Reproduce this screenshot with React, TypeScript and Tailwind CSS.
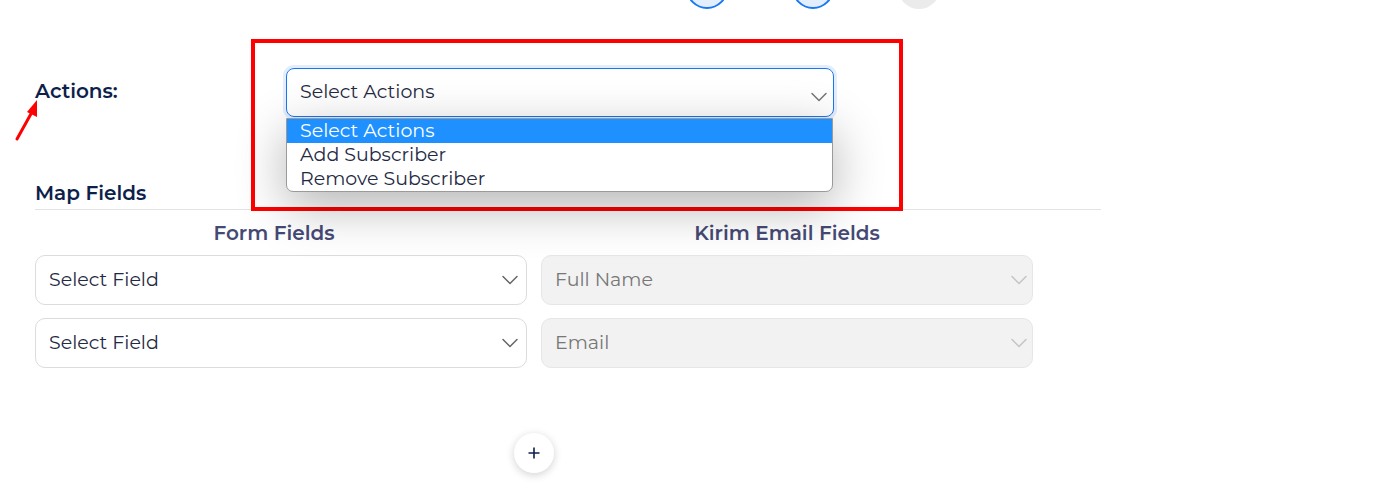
import type { FC } from "react";

const Chevron: FC<{ className?: string }> = ({ className }) => (
  <svg width="16" height="10" viewBox="0 0 16 10" className={className} fill="none">
    <path d="M1 1.5l7 7 7-7" stroke="currentColor" strokeWidth="1.5" strokeLinecap="round" strokeLinejoin="round" />
  </svg>
);

interface FieldSelectProps {
  value: string;
  disabled?: boolean;
}

const FieldSelect: FC<FieldSelectProps> = ({ value, disabled }) => (
  <div
    className={
      disabled
        ? "flex h-[50px] items-center justify-between rounded-[10px] border border-[#e6e6e6] bg-[#f2f2f2] pl-[13px] pr-[5px] text-[#777777]"
        : "flex h-[50px] items-center justify-between rounded-[10px] border border-[#dcdcdc] bg-white pl-[13px] pr-[8px] text-[#1f2a44]"
    }
  >
    <span>{value}</span>
    <Chevron className={disabled ? "text-[#c4c4c4]" : "text-[#666666]"} />
  </div>
);

export default function App() {
  return (
    <div className="relative h-[490px] w-[1392px] overflow-hidden bg-white font-['Montserrat','DejaVu_Sans',sans-serif] text-[19px] text-[#1f2a44]">
      {/* stepper remnants */}
      <div className="-mt-[33px] ml-[686px] flex gap-[64px]">
        <div className="h-[42px] w-[42px] rounded-full border-2 border-[#1877f2] bg-[#e3efff]" />
        <div className="h-[42px] w-[42px] rounded-full border-2 border-[#1877f2] bg-[#e3efff]" />
        <div className="h-[42px] w-[42px] rounded-full bg-[#ebebeb]" />
      </div>

      <div className="ml-[35px] w-[1066px]">
        <div className="mt-[59px] flex">
          <div className="w-[251px] pt-[8px] text-[20px] font-semibold text-[#0f1f4b]">Actions:</div>
          <div className="relative w-[548px]">
            <div className="flex h-[49px] items-center justify-between rounded-[8px] border border-[#1877f2] pl-[13px] pr-[6px] shadow-[0_0_0_3px_#e3edfc]">
              <span>Select Actions</span>
              <Chevron className="mt-[8px] text-[#777777]" />
            </div>
            <ul className="absolute left-0 top-[50px] z-10 w-[547px] overflow-hidden rounded-b-[7px] border border-[#9a9a9a] bg-white leading-[24px] shadow-[0_14px_50px_rgba(0,0,0,0.3)]">
              <li className="bg-[#1e90ff] pl-[13px] text-white">Select Actions</li>
              <li className="pl-[13px]">Add Subscriber</li>
              <li className="pl-[13px]">Remove Subscriber</li>
            </ul>
          </div>
        </div>

        <div className="mt-[63px] border-b border-[#e3e3e3] pb-[2px] text-[20px] font-semibold leading-[27px] text-[#0f1f4b]">
          Map Fields
        </div>

        <div className="grid w-[998px] grid-cols-2 gap-x-[14px] pt-[9px]">
          <div className="pr-[14px] text-center text-[20px] font-semibold leading-[28px] text-[#454a75]">Form Fields</div>
          <div className="text-center text-[20px] font-semibold leading-[28px] text-[#454a75]">Kirim Email Fields</div>
        </div>
        <div className="mt-[8px] grid w-[998px] grid-cols-2 gap-x-[14px] gap-y-[13px]">
          <FieldSelect value="Select Field" />
          <FieldSelect value="Full Name" disabled />
          <FieldSelect value="Select Field" />
          <FieldSelect value="Email" disabled />
        </div>

        <div className="mt-[65px] flex justify-center pr-[68px]">
          <button className="flex h-[40px] w-[40px] items-center justify-center rounded-full bg-white text-[#0f1f4b] shadow-[0_2px_8px_rgba(0,0,0,0.18)]">
            <svg width="12" height="12" viewBox="0 0 12 12">
              <path d="M6 0.5v11M0.5 6h11" stroke="currentColor" strokeWidth="1.6" />
            </svg>
          </button>
        </div>
      </div>

      {/* annotation: red box */}
      <div className="pointer-events-none absolute left-[251px] top-[39px] h-[172px] w-[652px] border-4 border-[#ff0000]" />

      {/* annotation: red arrow */}
      <svg className="pointer-events-none absolute left-[10px] top-[96px]" width="34" height="50" viewBox="0 0 34 50">
        <path d="M7 43L22 16" stroke="#ff0000" strokeWidth="3" strokeLinecap="round" />
        <path d="M27 4L17 16l10 5z" fill="#ff0000" />
      </svg>
    </div>
  );
}
